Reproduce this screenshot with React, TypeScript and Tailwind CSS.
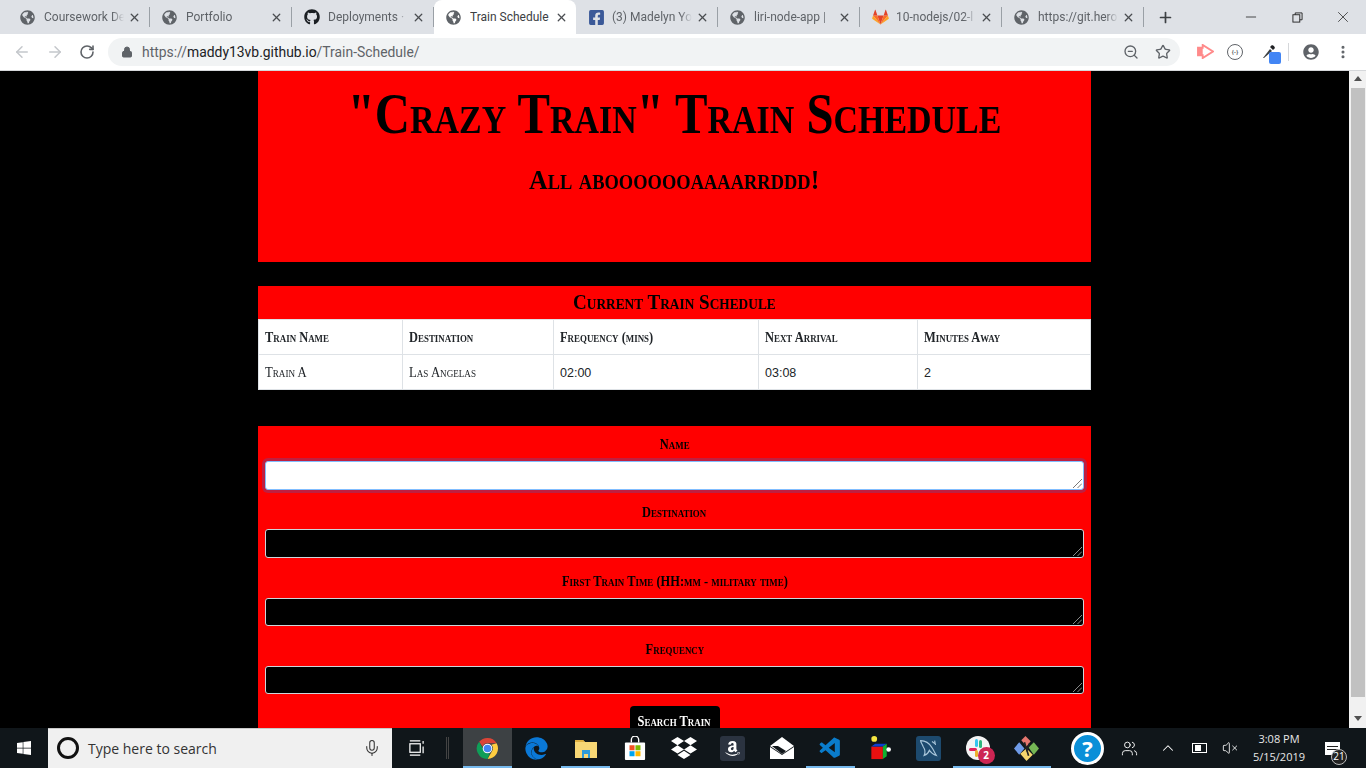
import { ArrowLeft, ArrowRight, RotateCw, Lock, ZoomOut, Star, MoreVertical, Plus, X, Minus, Mic, VolumeX, ChevronUp, Users } from "lucide-react";
import { FaGlobeAmericas, FaGithub, FaFacebookSquare, FaUserCircle, FaWindows, FaEdge, FaDropbox, FaAmazon } from "react-icons/fa";
import { VscVscode } from "react-icons/vsc";
import type { ReactNode } from "react";

const display = "font-['Liberation_Serif',serif] font-bold [font-variant:small-caps]";

function GitlabIcon() {
  return (
    <svg viewBox="0 0 24 24" className="h-[17px] w-[17px]">
      <path d="M12 22 16.4 9H7.6z" fill="#e24329" />
      <path d="M12 22 7.6 9H1.5z" fill="#fc6d26" />
      <path d="M12 22 16.4 9h6.1z" fill="#fc6d26" />
      <path d="M1.5 9 .3 13c-.1.4 0 .8.4 1L12 22z" fill="#fca326" />
      <path d="M22.5 9l1.2 4c.1.4 0 .8-.4 1L12 22z" fill="#fca326" />
      <path d="M1.5 9H7.6L5 1.5c-.1-.4-.6-.4-.8 0z" fill="#e24329" />
      <path d="M22.5 9H16.4L19 1.5c.1-.4.6-.4.8 0z" fill="#e24329" />
    </svg>
  );
}

const globe = <FaGlobeAmericas className="h-[15px] w-[15px] text-[#5f6368]" />;

const tabs: { title: string; icon: ReactNode; active?: boolean }[] = [
  { title: "Coursework De", icon: globe },
  { title: "Portfolio", icon: globe },
  { title: "Deployments ·", icon: <FaGithub className="h-4 w-4 text-[#1b1f23]" /> },
  { title: "Train Schedule", icon: globe, active: true },
  { title: "(3) Madelyn Yo", icon: <FaFacebookSquare className="h-[17px] w-[17px] text-[#3b5998]" /> },
  { title: "liri-node-app |", icon: globe },
  { title: "10-nodejs/02-l", icon: <GitlabIcon /> },
  { title: "https://git.hero", icon: globe },
];

function Tab({ title, icon, active }: { title: string; icon: ReactNode; active?: boolean }) {
  return (
    <div className={`flex h-[34px] w-[142px] shrink-0 items-center pl-[12px] pr-[8px] ${active ? "rounded-t-[8px] bg-white" : "border-r border-[#9aa0a6]/70 [border-image:linear-gradient(transparent_8px,#9aa0a6_8px,#9aa0a6_26px,transparent_26px)_1]"}`}>
      <span className="flex w-[24px] shrink-0 items-center">{icon}</span>
      <span className={`min-w-0 flex-1 overflow-hidden whitespace-nowrap text-[12px] ${active ? "text-[#3c4043]" : "text-[#5f6368] [mask-image:linear-gradient(to_right,black_85%,transparent)]"}`}>{title}</span>
      <X className="ml-1 h-[13px] w-[13px] shrink-0 text-[#4a4d51]" strokeWidth={2.4} />
    </div>
  );
}

function Browser() {
  return (
    <div className="shrink-0 font-['Roboto',sans-serif]">
      <div className="flex h-[34px] items-center bg-[#dee1e6] pl-[8px]">
        {tabs.map((t) => (
          <Tab key={t.title} title={t.title} icon={t.icon} active={t.active} />
        ))}
        <Plus className="ml-[13px] h-[17px] w-[17px] text-[#3c4043]" strokeWidth={2.4} />
        <div className="ml-auto flex h-full items-center text-[#222]">
          <span className="flex w-[46px] justify-center"><Minus className="h-4 w-4" strokeWidth={1.2} /></span>
          <span className="flex w-[46px] justify-center">
            <svg viewBox="0 0 12 12" className="h-[11px] w-[11px]" fill="none" stroke="currentColor"><rect x="1" y="3" width="7.5" height="8" /><path d="M3.5 3V1H11v7.5H8.5" /></svg>
          </span>
          <span className="flex w-[46px] justify-center"><X className="h-[18px] w-[18px]" strokeWidth={1} /></span>
        </div>
      </div>
      <div className="flex h-[37px] items-center border-b border-[#d5d7da] bg-white pb-[1px]">
        <div className="flex w-[108px] shrink-0 items-center">
          <span className="flex w-[44px] justify-center"><ArrowLeft className="h-[18px] w-[18px] text-[#c4c7cb]" strokeWidth={2} /></span>
          <span className="flex w-[22px] justify-center"><ArrowRight className="h-[18px] w-[18px] text-[#c4c7cb]" strokeWidth={2} /></span>
          <span className="flex w-[42px] justify-center"><RotateCw className="h-[16px] w-[16px] text-[#5f6368]" strokeWidth={2.4} /></span>
        </div>
        <div className="flex h-[28px] w-[1072px] shrink-0 items-center rounded-full bg-[#f1f3f4] pl-[13px] pr-[9px]">
          <Lock className="h-[12px] w-[12px] text-[#5f6368]" fill="#5f6368" />
          <span className="ml-[9px] pt-[1px] text-[13.9px] text-[#5f6368]">https://<span className="text-[#202124]">maddy13vb.github.io</span>/Train-Schedule/</span>
          <ZoomOut className="ml-auto h-4 w-4 text-[#5f6368]" strokeWidth={2} />
          <Star className="ml-[16px] h-4 w-4 text-[#5f6368]" strokeWidth={2} />
        </div>
        <div className="flex flex-1 items-center pl-[17px]">
          <svg viewBox="0 0 18 16" className="h-[15px] w-[17px]"><path d="M1 4h5V1l11 7-11 7v-3H1z" fill="none" stroke="#ff8a8a" strokeWidth="2" /><path d="M1 4h5v8H1z" fill="#ff8a8a" /></svg>
          <span className="ml-[13px] flex h-[16px] w-[16px] items-center justify-center rounded-full border border-[#5f6368] text-[6px] font-bold text-[#5f6368]">{"{-}"}</span>
          <span className="relative ml-[18px] h-[18px] w-[18px]">
            <svg viewBox="0 0 16 16" className="h-[16px] w-[16px]"><path d="M2 15 9 6l2 2-8 7z" fill="#3c4043" /><path d="M9 4l2-2 2 1 1 2-2 2z" fill="#202124" /></svg>
            <span className="absolute bottom-[-3px] right-[-2px] h-[12px] w-[12px] rounded-[2px] bg-[#4285f4]" />
          </span>
          <span className="ml-[9px] h-[18px] border-l border-[#d5d7da]" />
          <FaUserCircle className="ml-[14px] h-[16px] w-[16px] text-[#5f6368]" />
          <MoreVertical className="ml-[16px] h-4 w-4 text-[#5f6368]" strokeWidth={2.6} />
        </div>
      </div>
    </div>
  );
}

function Resize({ color }: { color: string }) {
  return (
    <svg viewBox="0 0 9 9" className={`absolute bottom-[1px] right-[1px] h-[9px] w-[9px] ${color}`} stroke="currentColor" strokeWidth="0.8" fill="none">
      <path d="M0 9 9 0M4.5 9 9 4.5" />
    </svg>
  );
}

function Field({ label, first, mt }: { label: string; first?: boolean; mt: string }) {
  return (
    <div className={mt}>
      <div className={`text-center text-[14px] leading-[21px] text-black ${display}`}>
        <span className="inline-block scale-x-[0.89]">{label}</span>
      </div>
      <div className={`relative mt-[6px] h-[28.6px] rounded-[3px] border ${first ? "border-[#80bdff] bg-white shadow-[0_0_0_3px_rgba(0,123,255,0.25)]" : "border-[#ced4da] bg-black"}`}>
        <Resize color={first ? "text-[#555]" : "text-[#aaa]"} />
      </div>
    </div>
  );
}

function TrainTable() {
  const head = ["Train Name", "Destination", "Frequency (mins)", "Next Arrival", "Minutes Away"];
  const cols = ["w-[144px]", "w-[151px]", "w-[205px]", "w-[159px]", "w-[173px]"];
  return (
    <table className="w-[832px] table-fixed border-collapse bg-white text-[14px] text-[#212529]">
      <colgroup>
        {cols.map((c) => <col key={c} className={c} />)}
      </colgroup>
      <thead>
        <tr className="h-[35px]">
          {head.map((h) => (
            <th key={h} className={`whitespace-nowrap border border-[#dee2e6] px-[6px] text-left ${display}`}>
              <span className="inline-block origin-left scale-x-[0.89]">{h}</span>
            </th>
          ))}
        </tr>
      </thead>
      <tbody>
        <tr className="h-[35px]">
          <td className={`border border-[#dee2e6] px-[6px] ${display} !font-normal`}><span className="inline-block origin-left scale-x-[0.91]">Train A</span></td>
          <td className={`border border-[#dee2e6] px-[6px] ${display} !font-normal`}><span className="inline-block origin-left scale-x-[0.91]">Las Angelas</span></td>
          <td className="border border-[#dee2e6] px-[6px] pt-[2px] font-['Liberation_Sans',sans-serif] text-[12.5px]">02:00</td>
          <td className="border border-[#dee2e6] px-[6px] pt-[2px] font-['Liberation_Sans',sans-serif] text-[12.5px]">03:08</td>
          <td className="border border-[#dee2e6] px-[6px] pt-[2px] font-['Liberation_Sans',sans-serif] text-[12.5px]">2</td>
        </tr>
      </tbody>
    </table>
  );
}

function Page() {
  return (
    <div className="flex min-h-0 flex-1">
      <div className="min-w-0 flex-1 overflow-hidden bg-black">
        <div className="mx-auto w-[833px]">
          <div className="h-[191px] overflow-hidden bg-[#ff0000] pt-[11px] text-center text-black">
            <h1 className={`whitespace-nowrap text-[56px] leading-[64px] ${display}`}><span className="inline-block scale-x-[0.87]">"Crazy Train" Train Schedule</span></h1>
            <p className={`mt-[17px] text-[28px] leading-[34px] ${display}`}><span className="inline-block scale-x-[0.923]">All abooooooaaaarrddd!</span></p>
          </div>
          <div className="mt-[24px]">
            <div className={`flex h-[33px] items-center justify-center bg-[#ff0000] pb-[2px] text-[20px] text-black ${display}`}><span className="inline-block scale-x-[0.953]">Current Train Schedule</span></div>
            <TrainTable />
          </div>
          <div className="mt-[36px] h-[320px] bg-[#ff0000] px-[7px] pt-[8px]">
            <Field label="Name" first mt="mt-0" />
            <Field label="Destination" mt="mt-[12.7px]" />
            <Field label="First Train Time (HH:mm - military time)" mt="mt-[12.7px]" />
            <Field label="Frequency" mt="mt-[12.7px]" />
            <div className="mt-[12px] flex justify-center">
              <button className={`h-[31px] w-[90px] rounded-[4px] bg-black text-[14px] text-white ${display}`}><span className="inline-block scale-x-[0.89]">Search Train</span></button>
            </div>
          </div>
        </div>
      </div>
      <div className="flex w-[17px] shrink-0 flex-col items-center bg-[#f1f1f1]">
        <span className="mt-[5px] h-0 w-0 border-x-[4px] border-b-[5px] border-x-transparent border-b-[#505050]" />
        <span className="mt-[7px] h-[609px] w-[14px] bg-[#c1c1c1]" />
        <span className="mt-[19px] h-0 w-0 border-x-[4px] border-t-[5px] border-x-transparent border-t-[#505050]" />
      </div>
    </div>
  );
}

function ChromeIcon() {
  return (
    <svg viewBox="0 0 24 24" className="h-[23px] w-[23px]">
      <path d="M12 1a11 11 0 0 1 9.5 5.5H12a5.5 5.5 0 0 0-5.2 3.6L3.3 5A11 11 0 0 1 12 1z" fill="#db4437" />
      <path d="M21.5 6.5A11 11 0 0 1 12 23l4.7-8.2A5.5 5.5 0 0 0 16 8z" fill="#ffcd40" />
      <path d="M12 23A11 11 0 0 1 3.3 5l4.6 8.4a5.5 5.5 0 0 0 6.7 3.3z" fill="#0f9d58" />
      <circle cx="12" cy="12" r="5" fill="#fff" />
      <circle cx="12" cy="12" r="4" fill="#4285f4" />
    </svg>
  );
}

function FolderIcon() {
  return (
    <svg viewBox="0 0 24 22" className="h-[22px] w-[24px]">
      <path d="M1 3h8l2 2h12v16H1z" fill="#f8d775" />
      <path d="M1 3h8l2 2H1z" fill="#e0b040" />
      <path d="M8 13h8v8h-2v-4h-4v4H8z" fill="#2f9bd8" />
    </svg>
  );
}

function StoreIcon() {
  return (
    <svg viewBox="0 0 24 26" className="h-[24px] w-[22px]">
      <path d="M8 7V4a4 4 0 0 1 8 0v3" fill="none" stroke="#fff" strokeWidth="1.5" />
      <rect x="1" y="7" width="22" height="19" rx="1" fill="#fff" />
      <rect x="6" y="10" width="5.5" height="5.5" fill="#f25022" />
      <rect x="12.5" y="10" width="5.5" height="5.5" fill="#7fba00" />
      <rect x="6" y="16.5" width="5.5" height="5.5" fill="#00a4ef" />
      <rect x="12.5" y="16.5" width="5.5" height="5.5" fill="#ffb900" />
    </svg>
  );
}

function MailIcon() {
  return (
    <svg viewBox="0 0 24 22" className="h-[22px] w-[24px]">
      <path d="M0 9 12 0l12 9v13H0z" fill="#fff" />
      <path d="M2 9l10 8 4-3-8-5z" fill="#10161a" />
      <path d="M12 17 0 9v1l12 8 12-8V9z" fill="#10161a" />
    </svg>
  );
}

function CubeIcon() {
  return (
    <svg viewBox="0 0 24 26" className="h-[25px] w-[24px]">
      <circle cx="6" cy="3" r="3" fill="#f5e642" />
      <rect x="3" y="11" width="12" height="13" fill="#e81010" />
      <path d="M3 11l4-3h12l-4 3z" fill="#0b3fd0" />
      <path d="M15 11l4-3v13l-4 3z" fill="#10b030" />
      <circle cx="21" cy="14" r="2.4" fill="#fff" />
    </svg>
  );
}

function MysqlIcon() {
  return (
    <span className="flex h-[25px] w-[25px] items-center justify-center rounded-[3px] bg-[#1d4a6e]">
      <svg viewBox="0 0 24 24" className="h-[21px] w-[21px]" fill="none" stroke="#a9c6da" strokeWidth="1.3">
        <path d="M3 3c5 0 10 3 13 8 2 3 3 6 5 9-4-1-6-3-8-6-1 3-3 5-6 6 2-4 1-7-1-10C5 7 3 5 3 3z" />
        <path d="M16 4l4 3M19 3l1 5" />
      </svg>
    </span>
  );
}

function SlackIcon() {
  return (
    <span className="relative h-[24px] w-[24px] rounded-full bg-[#f4f4f4]">
      <svg viewBox="0 0 24 24" className="h-[24px] w-[24px]">
        <rect x="9" y="3" width="3" height="8" rx="1.5" fill="#36c5f0" />
        <rect x="3" y="12" width="8" height="3" rx="1.5" fill="#e01e5a" />
        <rect x="13" y="4" width="3" height="8" rx="1.5" fill="#2eb67d" />
        <rect x="9" y="14" width="3" height="7" rx="1.5" fill="#ecb22e" />
      </svg>
      <span className="absolute bottom-[-4px] right-[-5px] flex h-[17px] w-[17px] items-center justify-center rounded-full bg-[#cd2553] text-[10px] font-bold text-white">2</span>
    </span>
  );
}

function KrakenIcon() {
  return (
    <svg viewBox="0 0 24 24" className="h-[25px] w-[25px]">
      <path d="M10 12 5 6 0 12l5 6z" fill="#6f9be8" />
      <path d="M7 4l4-4 5 5-4 5z" fill="#e5766e" />
      <path d="M14 11l5-5 5 6-5 6z" fill="#76b755" />
      <path d="M6 17l6-5 6 6-6 6z" fill="#f5d76e" />
      <path d="M10 6l4 13M15 7l-3 8" stroke="#222" strokeWidth="1.6" />
    </svg>
  );
}

const dock: { key: string; node: ReactNode; open?: boolean; active?: boolean }[] = [
  { key: "chrome", node: <ChromeIcon />, open: true, active: true },
  { key: "edge", node: <FaEdge className="h-[23px] w-[23px] text-[#0a78d7]" /> },
  { key: "folder", node: <FolderIcon />, open: true },
  { key: "store", node: <StoreIcon /> },
  { key: "dropbox", node: <FaDropbox className="h-[26px] w-[26px] text-white" /> },
  { key: "amazon", node: <span className="flex h-[25px] w-[25px] items-center justify-center rounded-[3px] bg-[#2b3340]"><FaAmazon className="h-[17px] w-[17px] text-white" /></span> },
  { key: "mail", node: <MailIcon /> },
  { key: "vscode", node: <VscVscode className="h-[25px] w-[25px] text-[#0a7ccb]" />, open: true },
  { key: "cube", node: <CubeIcon /> },
  { key: "mysql", node: <MysqlIcon /> },
  { key: "slack", node: <SlackIcon />, open: true },
  { key: "kraken", node: <KrakenIcon />, open: true },
];

function Taskbar() {
  return (
    <div className="flex h-[40px] shrink-0 items-stretch bg-[#10161a] font-['Open_Sans',sans-serif] text-white">
      <div className="flex w-[48px] shrink-0 items-center justify-center"><FaWindows className="h-4 w-4 text-white" /></div>
      <div className="flex w-[344px] shrink-0 items-center border-t border-[#c8c8c8] bg-[#f0f0f0] pb-[1px] pl-[9px] pr-[11px] text-[#222]">
        <span className="h-[22px] w-[22px] rounded-full border-[3px] border-[#111]" />
        <span className="ml-[9px] text-[14px] text-[#333]">Type here to search</span>
        <Mic className="ml-auto h-[18px] w-[18px] text-[#333]" strokeWidth={1.4} />
      </div>
      <div className="flex w-[71px] shrink-0 items-center pl-[16px]">
        <svg viewBox="0 0 18 18" className="h-[17px] w-[17px]" fill="none" stroke="#fff" strokeWidth="1.3"><rect x="2" y="4" width="11" height="9" /><path d="M2 1h11M2 16h11M16 1v3M16 7v7" /></svg>
        <span className="ml-[21px] h-[22px] w-[3px] border-x border-[#444]" />
      </div>
      {dock.map((d) => (
        <div key={d.key} className={`relative flex w-[49px] shrink-0 items-center justify-center ${d.active ? "bg-[#3d4144]" : ""}`}>
          {d.node}
          {d.open && <span className="absolute inset-x-0 bottom-0 h-[2px] bg-[#76b9ed]" />}
        </div>
      ))}
      <div className="flex flex-1 items-center pl-[20px]">
        <span className="flex h-[33px] w-[33px] items-center justify-center rounded-full border-[3px] border-white bg-[#0a8fd8] text-[22px] font-bold leading-none text-white">?</span>
        <Users className="ml-[17px] h-[17px] w-[17px] text-white" strokeWidth={1.3} />
        <ChevronUp className="ml-[21px] h-[18px] w-[18px] text-white" strokeWidth={1.4} />
        <span className="relative ml-[15px] flex h-[10px] w-[15px] items-center border border-white pl-[2px]"><span className="h-[6px] w-[6px] bg-white" /></span>
        <VolumeX className="ml-[15px] h-[16px] w-[16px] text-white" strokeWidth={1.3} />
        <div className="ml-[14px] w-[54px] whitespace-nowrap text-center text-[11px] leading-[18px] text-[#e8e8e8]">
          <div>3:08 PM</div>
          <div>5/15/2019</div>
        </div>
        <span className="relative ml-[19px] flex h-[13px] w-[15px] flex-col justify-center gap-[2px] bg-white px-[2px]">
          <span className="h-[1px] bg-[#222]" />
          <span className="h-[1px] bg-[#222]" />
          <span className="absolute bottom-[-10px] right-[-7px] flex h-[16px] w-[16px] items-center justify-center rounded-full border border-[#bbb] bg-[#222] text-[10px] text-white">21</span>
        </span>
      </div>
    </div>
  );
}

export default function App() {
  return (
    <div className="flex h-screen w-full flex-col overflow-hidden">
      <Browser />
      <Page />
      <Taskbar />
    </div>
  );
}
